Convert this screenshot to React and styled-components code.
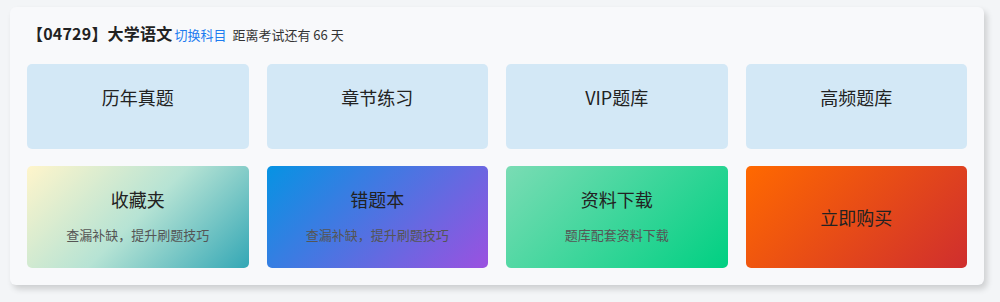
import React from 'react';
import styled, { createGlobalStyle } from 'styled-components';

const GlobalStyle = createGlobalStyle`
  html, body {
    margin: 0;
    padding: 0;
    background: #f3f5f7;
    font-family: "Noto Sans CJK SC", "Noto Sans", sans-serif;
  }
`;

const Page = styled.div`
  padding: 7px 16px 17px 10px;
`;

const Card = styled.section`
  background: #f8f9fb;
  border-radius: 6px;
  box-shadow: 3px 4px 6px rgba(0, 0, 0, 0.16);
  padding: 14px 17px 16px 17px;
  height: 248px;
`;

const Header = styled.div`
  display: flex;
  align-items: baseline;
  height: 26px;
  margin-bottom: 17px;
`;

const Course = styled.h3`
  margin: 0;
  font-size: 16px;
  font-weight: 700;
  color: #222;
  margin-right: 2px;
  letter-spacing: 0.2px;
`;

const Switch = styled.a`
  font-size: 13px;
  color: #1e7cf0;
  cursor: pointer;
  margin-right: 6px;
`;

const Countdown = styled.span`
  font-size: 13px;
  color: #333;
`;

const Grid = styled.div`
  display: grid;
  grid-template-columns: repeat(4, 1fr);
  grid-template-rows: 85px 102px;
  column-gap: 18px;
  row-gap: 17px;
`;

const Tile = styled.div`
  border-radius: 5px;
  background: ${p => p.$bg || '#d3e8f6'};
  display: flex;
  flex-direction: column;
  align-items: center;
  justify-content: ${p => (p.$center ? 'center' : 'flex-start')};
  padding-top: ${p => (p.$center ? '0' : '21px')};
  box-sizing: border-box;
  cursor: pointer;
`;

const Title = styled.div`
  font-size: 18px;
  line-height: 24px;
  color: #222;
`;

const Sub = styled.div`
  margin-top: 15px;
  font-size: 13px;
  line-height: 18px;
  color: #555;
`;

const topTiles = ['历年真题', '章节练习', 'VIP题库', '高频题库'];

const bottomTiles = [
  {
    title: '收藏夹',
    sub: '查漏补缺，提升刷题技巧',
    bg: 'linear-gradient(135deg, #fff5cb 0%, #b6e3d4 50%, #33a7b5 100%)',
  },
  {
    title: '错题本',
    sub: '查漏补缺，提升刷题技巧',
    bg: 'linear-gradient(135deg, #0693e3 0%, #9b51e0 100%)',
  },
  {
    title: '资料下载',
    sub: '题库配套资料下载',
    bg: 'linear-gradient(135deg, #7adcb4 0%, #00d082 100%)',
  },
  {
    title: '立即购买',
    bg: 'linear-gradient(135deg, #ff6900 0%, #cf2e2e 100%)',
  },
];

const App = () => (
  <>
    <GlobalStyle />
    <Page>
      <Card>
        <Header>
          <Course>【04729】大学语文</Course>
          <Switch>切换科目</Switch>
          <Countdown>距离考试还有 66 天</Countdown>
        </Header>
        <Grid>
          {topTiles.map(t => (
            <Tile key={t}>
              <Title>{t}</Title>
            </Tile>
          ))}
          {bottomTiles.map(t => (
            <Tile key={t.title} $bg={t.bg} $center={!t.sub}>
              <Title>{t.title}</Title>
              {t.sub && <Sub>{t.sub}</Sub>}
            </Tile>
          ))}
        </Grid>
      </Card>
    </Page>
  </>
);

export default App;
